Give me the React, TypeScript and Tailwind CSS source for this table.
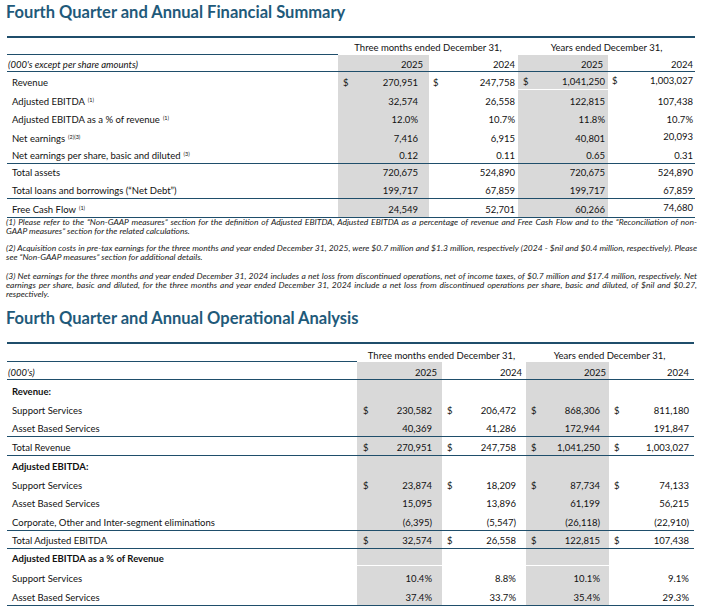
import React from "react";

type Cfg = { w: string[]; pl: string[]; pr: string[]; hpr: string[] };

const TOP: Cfg = {
  w: ["w-[331px]", "w-[91px]", "w-[89px]", "w-[90px]", "w-[87px]"],
  pl: ["pl-[5px]", "pl-[4px]", "pl-[5px]", "pl-[4px]"],
  pr: ["pr-[11px]", "pr-[3px]", "pr-[3px]", "pr-[2px]"],
  hpr: ["pr-[6px]", "pr-[3px]", "pr-[5px]", "pr-[2px]"],
};
const BOT: Cfg = {
  w: ["w-[350px]", "w-[85px]", "w-[84px]", "w-[83px]", "w-[84px]"],
  pl: ["pl-[6px]", "pl-[5px]", "pl-[5px]", "pl-[5px]"],
  pr: ["pr-[10px]", "pr-[10px]", "pr-[9px]", "pr-[4px]"],
  hpr: ["pr-[5px]", "pr-[4px]", "pr-[3px]", "pr-[4px]"],
};

const LINE = "border-[#1f4e6b]";

function Sup({ children }: { children: React.ReactNode }) {
  return <sup className="text-[5.5px] ml-[3px] -top-[3px]">{children}</sup>;
}

type RowProps = {
  t: Cfg;
  h: string;
  label?: React.ReactNode;
  bold?: boolean;
  cells?: (string | null)[];
  dollar?: boolean;
  border?: boolean;
  raise?: number[];
  white?: number[];
};

function Row({ t, h, label, bold, cells, dollar, border, raise = [], white = [] }: RowProps) {
  return (
    <div className={`flex ${h} ${border ? `border-b ${LINE}` : ""}`}>
      <div className={`${t.w[0]} shrink-0 flex items-end pb-[1px] pl-[5px] ${bold ? "font-bold" : ""}`}>
        <span>{label}</span>
      </div>
      {[0, 1, 2, 3].map((i) => {
        const v = cells ? cells[i] : null;
        return (
          <div
            key={i}
            className={`${t.w[i + 1]} shrink-0 flex items-end ${raise.includes(i) ? "pb-[3px]" : "pb-[1px]"} ${t.pl[i]} ${t.pr[i]} ${
              i % 2 === 0 ? "bg-[#d9d9d9]" : ""
            } ${white.includes(i) ? "border-b border-white" : ""}`}
          >
            {dollar && v !== null && <span>$</span>}
            <span className="ml-auto">{v}</span>
          </div>
        );
      })}
    </div>
  );
}

function YearRow({ t, h, label }: { t: Cfg; h: string; label: string }) {
  return (
    <div className={`flex ${h} border-b ${LINE}`}>
      <div className={`${t.w[0]} shrink-0 flex items-end pl-[1px] italic`}>
        <span>{label}</span>
      </div>
      {["2025", "2024", "2025", "2024"].map((y, i) => (
        <div
          key={i}
          className={`${t.w[i + 1]} shrink-0 flex items-end justify-end ${t.hpr[i]} ${i % 2 === 0 ? "bg-[#d9d9d9]" : ""}`}
        >
          {y}
        </div>
      ))}
    </div>
  );
}

function FootLine({ children, last }: { children: React.ReactNode; last?: boolean }) {
  return (
    <div className={`whitespace-nowrap ${last ? "" : "text-justify [text-align-last:justify]"}`}>{children}</div>
  );
}

export default function App() {
  return (
    <div className="w-[702px] h-[612px] overflow-hidden bg-white font-[Lato,sans-serif] text-[#111] text-[9.5px] leading-[12px]">
      <h1 className="pl-[6px] h-[24px] leading-[24px] text-[16.5px] font-bold text-[#1f5a7a]">
        Fourth Quarter and Annual Financial Summary
      </h1>

      <div className={`ml-[7px] mt-[12px] w-[688px] border-t-2 ${LINE}`}>
        <div className="flex h-[17px]">
          <div className={`${TOP.w[0]} shrink-0 border-b ${LINE}`} />
          <div className="flex w-[180px] justify-center items-end pb-[1px]">Three months ended December 31,</div>
          <div className="flex w-[177px] justify-center items-end pb-[1px]">Years ended December 31,</div>
        </div>
        <YearRow t={TOP} h="h-[17px]" label="(000's except per share amounts)" />
        <Row t={TOP} h="h-[18px]" label="Revenue" dollar cells={["270,951", "247,758", "1,041,250", "1,003,027"]} raise={[3]} white={[2]} />
        <Row t={TOP} h="h-[19px]" label={<>Adjusted EBITDA<Sup>(1)</Sup></>} cells={["32,574", "26,558", "122,815", "107,438"]} />
        <Row t={TOP} h="h-[18px]" label={<>Adjusted EBITDA as a % of revenue<Sup>(1)</Sup></>} cells={["12.0%", "10.7%", "11.8%", "10.7%"]} />
        <Row t={TOP} h="h-[19px]" label={<>Net earnings<Sup>(2)(3)</Sup></>} cells={["7,416", "6,915", "40,801", "20,093"]} raise={[3]} />
        <Row t={TOP} h="h-[18px]" border label={<>Net earnings per share, basic and diluted<Sup>(3)</Sup></>} cells={["0.12", "0.11", "0.65", "0.31"]} />
        <Row t={TOP} h="h-[16px]" label="Total assets" cells={["720,675", "524,890", "720,675", "524,890"]} />
        <Row t={TOP} h="h-[19px]" border label="Total loans and borrowings (“Net Debt”)" cells={["199,717", "67,859", "199,717", "67,859"]} />
        <Row t={TOP} h="h-[19px]" border label={<>Free Cash Flow<Sup>(1)</Sup></>} cells={["24,549", "52,701", "60,266", "74,680"]} raise={[3]} />
      </div>

      <div className="pl-[6px] w-[697px] italic text-[8.5px] leading-[9px] text-[#1a1a1a]">
        <div>
          <FootLine>
            (1) Please refer to the “Non-GAAP measures” section for the definition of Adjusted EBITDA, Adjusted EBITDA as a percentage of revenue and Free Cash Flow and to the “Reconciliation of non-
          </FootLine>
          <FootLine last>GAAP measures” section for the related calculations.</FootLine>
        </div>
        <div className="mt-[8px]">
          <FootLine>
            (2) Acquisition costs in pre-tax earnings for the three months and year ended December 31, 2025, were $0.7 million and $1.3 million, respectively (2024 - $nil and $0.4 million, respectively). Please
          </FootLine>
          <FootLine last>see “Non-GAAP measures” section for additional details.</FootLine>
        </div>
        <div className="mt-[10px]">
          <FootLine>
            (3) Net earnings for the three months and year ended December 31, 2024 includes a net loss from discontinued operations, net of income taxes, of $0.7 million and $17.4 million, respectively. Net
          </FootLine>
          <FootLine>
            earnings per share, basic and diluted, for the three months and year ended December 31, 2024 include a net loss from discontinued operations per share, basic and diluted, of $nil and $0.27,
          </FootLine>
          <FootLine last>respectively.</FootLine>
        </div>
      </div>

      <h2 className="mt-[7px] pl-[6px] h-[24px] leading-[24px] text-[16.5px] font-bold text-[#1f5a7a]">
        Fourth Quarter and Annual Operational Analysis
      </h2>

      <div className={`ml-[7px] mt-[12px] w-[687px] border-t-2 ${LINE}`}>
        <div className="flex h-[18px]">
          <div className={`${BOT.w[0]} shrink-0 border-b ${LINE}`} />
          <div className="flex w-[169px] justify-center items-end">Three months ended December 31,</div>
          <div className="flex w-[167px] justify-center items-end">Years ended December 31,</div>
        </div>
        <YearRow t={BOT} h="h-[18px]" label="(000's)" />
        <Row t={BOT} h="h-[19px]" bold label="Revenue:" />
        <Row t={BOT} h="h-[19px]" label="Support Services" dollar cells={["230,582", "206,472", "868,306", "811,180"]} />
        <Row t={BOT} h="h-[19px]" border label="Asset Based Services" cells={["40,369", "41,286", "172,944", "191,847"]} />
        <Row t={BOT} h="h-[19px]" border label="Total Revenue" dollar cells={["270,951", "247,758", "1,041,250", "1,003,027"]} />
        <Row t={BOT} h="h-[18px]" bold label="Adjusted EBITDA:" />
        <Row t={BOT} h="h-[19px]" label="Support Services" dollar cells={["23,874", "18,209", "87,734", "74,133"]} />
        <Row t={BOT} h="h-[18px]" label="Asset Based Services" cells={["15,095", "13,896", "61,199", "56,215"]} />
        <Row t={BOT} h="h-[20px]" border label="Corporate, Other and Inter-segment eliminations" cells={["(6,395)", "(5,547)", "(26,118)", "(22,910)"]} />
        <Row t={BOT} h="h-[18px]" border label="Total Adjusted EBITDA" dollar cells={["32,574", "26,558", "122,815", "107,438"]} />
        <Row t={BOT} h="h-[17px]" bold label="Adjusted EBITDA as a % of Revenue" white={[0, 2]} />
        <Row t={BOT} h="h-[20px]" label="Support Services" cells={["10.4%", "8.8%", "10.1%", "9.1%"]} />
        <Row t={BOT} h="h-[20px]" border label="Asset Based Services" cells={["37.4%", "33.7%", "35.4%", "29.3%"]} />
      </div>
    </div>
  );
}
